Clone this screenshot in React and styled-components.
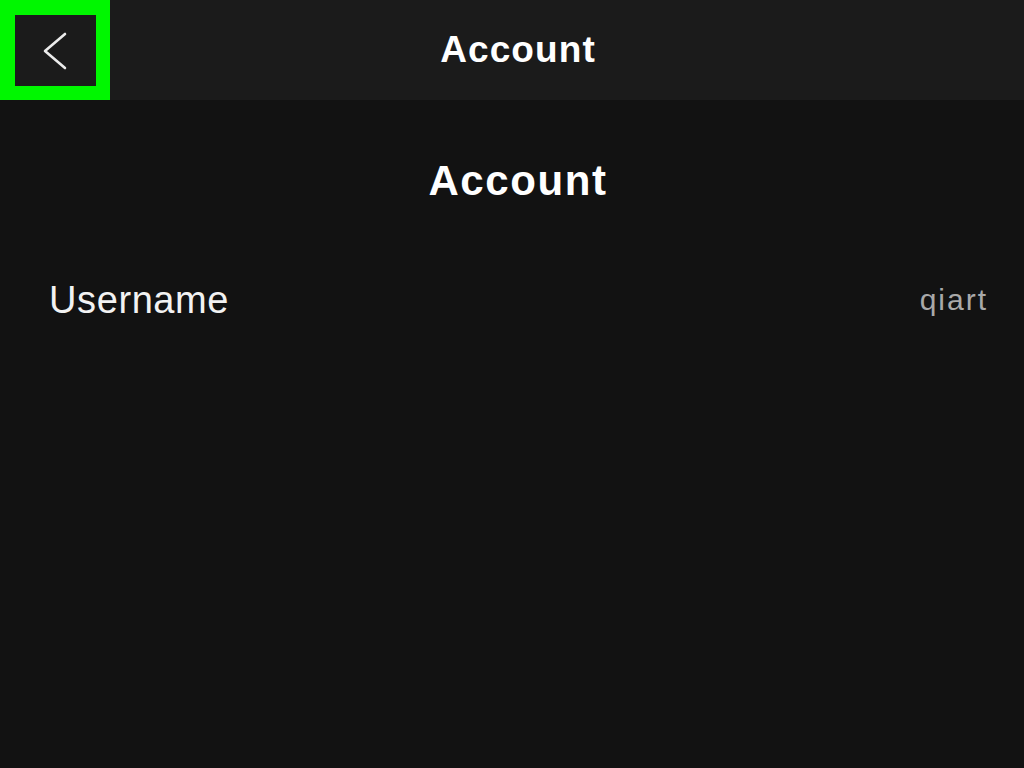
import React from 'react';
import styled, { createGlobalStyle } from 'styled-components';

const GlobalStyle = createGlobalStyle`
  html, body {
    margin: 0;
    padding: 0;
    background: #121212;
  }
  body {
    font-family: "Liberation Sans", Arial, sans-serif;
    color: #fff;
  }
`;

const Screen = styled.div`
  width: 1024px;
  height: 768px;
  background: #121212;
  display: flex;
  flex-direction: column;
`;

const TopBar = styled.header`
  height: 100px;
  background: #1b1b1b;
  display: grid;
  grid-template-columns: 110px 1fr 98px;
  align-items: center;
`;

const BackButton = styled.button`
  box-sizing: border-box;
  width: 110px;
  height: 100px;
  padding: 0;
  margin: 0;
  background: #1b1b1b;
  border-style: solid;
  border-color: #00f700;
  border-width: 15px 14px 14px 15px;
  display: flex;
  align-items: center;
  justify-content: center;
  cursor: pointer;
`;

const BarTitle = styled.h1`
  margin: 0;
  text-align: center;
  font-size: 37px;
  font-weight: 700;
  letter-spacing: 1.1px;
  color: #fff;
`;

const Content = styled.main`
  flex: 1;
  display: flex;
  flex-direction: column;
`;

const PageTitle = styled.h2`
  margin: 56px 0 0;
  padding-left: 12px;
  text-align: center;
  font-size: 42px;
  line-height: 50px;
  font-weight: 700;
  letter-spacing: 1.6px;
  color: #fff;
`;

const Row = styled.div`
  display: flex;
  justify-content: space-between;
  align-items: center;
  padding: 0 36px 0 49px;
  margin-top: 69px;
  height: 50px;
`;

const Label = styled.span`
  font-size: 38px;
  color: #f2f2f2;
  letter-spacing: 0.6px;
`;

const Value = styled.span`
  font-size: 30px;
  color: #a9a9a9;
  letter-spacing: 2px;
`;

function ChevronLeft() {
  return (
    <svg width="30" height="40" viewBox="0 0 30 40" fill="none">
      <path d="M24 3 L4 20 L24 37" stroke="#ececec" strokeWidth="2.6" strokeLinecap="round" strokeLinejoin="round" />
    </svg>
  );
}

export default function App() {
  return (
    <>
      <GlobalStyle />
      <Screen>
        <TopBar>
          <BackButton aria-label="Back">
            <ChevronLeft />
          </BackButton>
          <BarTitle>Account</BarTitle>
          <span />
        </TopBar>
        <Content>
          <PageTitle>Account</PageTitle>
          <Row>
            <Label>Username</Label>
            <Value>qiart</Value>
          </Row>
        </Content>
      </Screen>
    </>
  );
}
